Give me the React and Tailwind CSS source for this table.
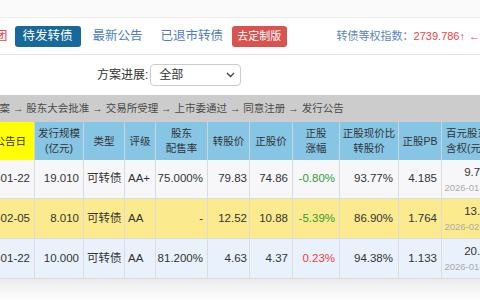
import React from "react";

const rows = [
  {
    bg: "bg-[#f7f7fa]",
    h: "h-[39px]",
    d: ["2026-01-22", "19.010", "可转债", "AA+", "75.000%", "79.83", "74.86", "-0.80%", "93.77%", "4.185"],
    up: false,
    v: "9.779",
    vd: "2026-01-22",
  },
  {
    bg: "bg-[#fcea8f]",
    h: "h-[40px]",
    d: ["2026-02-05", "8.010", "可转债", "AA", "-", "12.52", "10.88", "-5.39%", "86.90%", "1.764"],
    up: false,
    v: "13.57",
    vd: "2026-02-05",
  },
  {
    bg: "bg-[#e9f1fc]",
    h: "h-[40px]",
    d: ["2026-01-22", "10.000", "可转债", "AA", "81.200%", "4.63", "4.37", "0.23%", "94.38%", "1.133"],
    up: true,
    v: "20.31",
    vd: "2026-01-22",
  },
];

function Row({ r }) {
  const cell = "shrink-0 h-full flex items-center border-r border-[#dcdcdc] overflow-hidden whitespace-nowrap";
  return (
    <div className={`flex ${r.h} ${r.bg} border-b border-[#dcdcdc] text-[11.5px] text-[#333]`}>
      <div className={`${cell} w-[35px] justify-end pr-[4px]`}>{r.d[0]}</div>
      <div className={`${cell} w-[49px] justify-end pr-[4px]`}>{r.d[1]}</div>
      <div className={`${cell} w-[41px] justify-start pl-[3px]`}>{r.d[2]}</div>
      <div className={`${cell} w-[31px] justify-start pl-[3px]`}>{r.d[3]}</div>
      <div className={`${cell} w-[52px] justify-end pr-[4px]`}>{r.d[4]}</div>
      <div className={`${cell} w-[42px] justify-end pr-[2px]`}>{r.d[5]}</div>
      <div className={`${cell} w-[43px] justify-end pr-[4px]`}>{r.d[6]}</div>
      <div className={`${cell} w-[47px] justify-end pr-[4px] ${r.up ? "text-[#f23c3c]" : "text-[#2f9e2f]"}`}>{r.d[7]}</div>
      <div className={`${cell} w-[59px] justify-end pr-[5px]`}>{r.d[8]}</div>
      <div className={`${cell} w-[43px] justify-end pr-[4px]`}>{r.d[9]}</div>
      <div className={`${cell} w-[56px] flex-col !items-end justify-center pr-[4px] leading-[17px]`}>
        <span>{r.v}</span>
        <span className="text-[9.5px] text-[#aaa] leading-[14px]">{r.vd}</span>
      </div>
    </div>
  );
}

export default function App() {
  const hcell = "shrink-0 h-full flex flex-col items-center justify-center border-r border-[#c9d6de] leading-[15px] whitespace-nowrap overflow-hidden";
  return (
    <div className="w-[480px] h-[300px] overflow-hidden bg-white font-['Liberation_Sans','Noto_Sans_CJK_SC',sans-serif] text-[#333]">
      <div className="h-[18px] bg-[#fafafa] border-b border-[#ececec]" />
      <nav className="h-[37px] flex items-center border-b border-[#e3e3e3] whitespace-nowrap text-[12.5px]">
        <span className="-ml-[5px] text-[#f0434a]">团</span>
        <span className="ml-[7px] h-[21px] px-[8px] flex items-center rounded-[3px] bg-[#17699b] text-white">待发转债</span>
        <span className="ml-[12px] text-[#4f80bd]">最新公告</span>
        <span className="ml-[18px] text-[#4f80bd]">已退市转债</span>
        <span className="ml-[9px] w-[61px] h-[21px] flex items-center justify-center rounded-[3px] bg-[#d9534f] text-white text-[11px]">去定制版</span>
        <span className="ml-[50px] text-[11px] text-[#5b86b6]">转债等权指数：</span>
        <span className="text-[11px] text-[#f2404a]">2739.786↑</span>
        <span className="ml-[4px] text-[11px] text-[#f2404a]">←</span>
      </nav>
      <div className="h-[40px] flex items-center">
        <span className="ml-[97px] text-[12px] text-[#333]">方案进展:</span>
        <div className="ml-[2px] w-[91px] h-[22px] flex items-center justify-between border border-[#cccccc] rounded-[4px] pl-[8px] pr-[5px] text-[12px] text-[#333]">
          <span>全部</span>
          <svg width="9" height="6" viewBox="0 0 9 6" fill="none">
            <path d="M1 1l3.5 3.5L8 1" stroke="#444" strokeWidth="1.4" />
          </svg>
        </div>
      </div>
      <div className="h-[27px] bg-[#cccccc] flex items-center whitespace-nowrap text-[10.5px] text-[#4a4a4a]">
        <span className="-ml-[11px]">预案 → 股东大会批准 → 交易所受理 → 上市委通过 → 同意注册 → 发行公告</span>
      </div>
      <div className="flex h-[38px] bg-[#87c5e5] text-[10.5px] text-[#333]">
        <div className={`${hcell} w-[35px] bg-[#ffff00] !items-end pr-[8px]`}>公告日</div>
        <div className={`${hcell} w-[49px]`}><span>发行规模</span><span>(亿元)</span></div>
        <div className={`${hcell} w-[41px]`}>类型</div>
        <div className={`${hcell} w-[31px]`}>评级</div>
        <div className={`${hcell} w-[52px]`}><span>股东</span><span>配售率</span></div>
        <div className={`${hcell} w-[42px]`}>转股价</div>
        <div className={`${hcell} w-[43px]`}>正股价</div>
        <div className={`${hcell} w-[47px]`}><span>正股</span><span>涨幅</span></div>
        <div className={`${hcell} w-[59px]`}><span>正股现价比</span><span>转股价</span></div>
        <div className={`${hcell} w-[43px]`}>正股PB</div>
        <div className={`${hcell} w-[56px] !items-start pl-[4px]`}><span>百元股东</span><span>含权(元)</span></div>
      </div>
      {rows.map((r, i) => (
        <Row key={i} r={r} />
      ))}
      <div className="h-[22px] bg-gradient-to-b from-[#ececec] to-white" />
    </div>
  );
}
